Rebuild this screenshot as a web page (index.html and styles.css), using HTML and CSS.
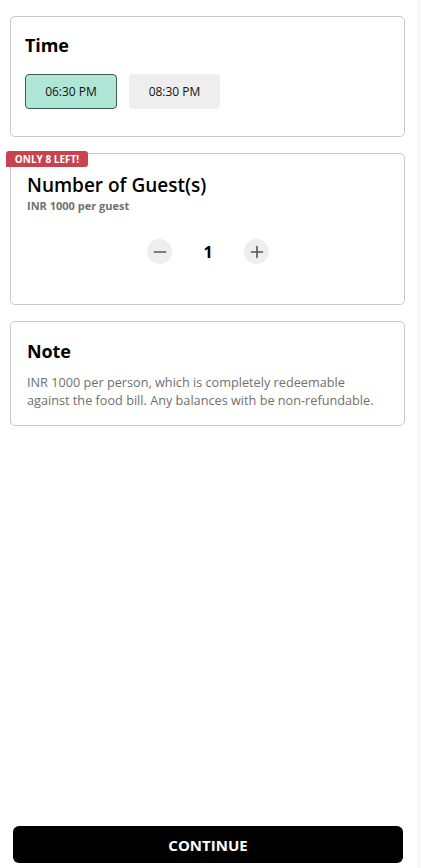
FILE: index.html
```html
<!DOCTYPE html>
<html lang="en">
<head>
<meta charset="utf-8">
<title>Reservation</title>
<link rel="stylesheet" href="styles.css">
</head>
<body>
<div class="page">
  <main class="content">
    <section class="card time-card">
      <h2 class="card-title">Time</h2>
      <div class="slots">
        <button class="slot selected">06:30 PM</button>
        <button class="slot">08:30 PM</button>
      </div>
    </section>

    <section class="card guest-card">
      <span class="badge">ONLY 8 LEFT!</span>
      <h2 class="guest-title">Number of Guest(s)</h2>
      <p class="guest-sub">INR 1000 per guest</p>
      <div class="stepper">
        <button class="step-btn" aria-label="Decrease">
          <svg width="14" height="14" viewBox="0 0 14 14"><path d="M1.5 7h11" stroke="#555" stroke-width="1.6" stroke-linecap="round"/></svg>
        </button>
        <span class="count">1</span>
        <button class="step-btn" aria-label="Increase">
          <svg width="14" height="14" viewBox="0 0 14 14"><path d="M1.5 7h11M7 1.5v11" stroke="#555" stroke-width="1.6" stroke-linecap="round"/></svg>
        </button>
      </div>
    </section>

    <section class="card note-card">
      <h2 class="card-title">Note</h2>
      <p class="note-text">INR 1000 per person, which is completely redeemable against the food bill. Any balances with be non-refundable.</p>
    </section>
  </main>

  <footer class="footer">
    <button class="continue">CONTINUE</button>
  </footer>
</div>
</body>
</html>
```

FILE: styles.css
```css
* {
  box-sizing: border-box;
}

html {
  background: #f8f8f8;
}

body {
  margin: 0;
  font-family: "Open Sans", "Noto Sans", sans-serif;
  color: #000;
}

.page {
  width: 417px;
  min-height: 868px;
  background: #fff;
  display: flex;
  flex-direction: column;
}

.content {
  padding: 16px 12px 0 10px;
  display: flex;
  flex-direction: column;
  gap: 16px;
}

.card {
  position: relative;
  border: 1px solid #c9c9c9;
  border-radius: 5px;
  background: #fff;
}

.time-card {
  height: 121px;
  padding: 16px 15px 0 14px;
}

.card-title {
  margin: 0;
  font-size: 18px;
  line-height: 24px;
  font-weight: 700;
  letter-spacing: -0.1px;
}

.slots {
  display: flex;
  gap: 12px;
  margin-top: 17px;
}

.slot {
  width: 91px;
  height: 35px;
  border: 1px solid transparent;
  border-radius: 4px;
  background: #eeeeee;
  font-family: inherit;
  font-size: 12px;
  color: #111;
  padding: 0;
}

.slot.selected {
  width: 92px;
  background: #b0e6d5;
  border-color: #3d5d52;
}

.guest-card {
  height: 152px;
  padding: 15px 15px 0 16px;
}

.badge {
  position: absolute;
  left: -5px;
  top: -3px;
  width: 82px;
  height: 16px;
  background: #c8434e;
  color: #fff;
  font-size: 10px;
  font-weight: 700;
  line-height: 16px;
  text-align: center;
  border-radius: 3px 3px 3px 0;
}

.guest-title {
  margin: 4px 0 0;
  font-size: 19px;
  line-height: 24px;
  font-weight: 600;
}

.guest-sub {
  margin: 1px 0 0;
  font-size: 11px;
  line-height: 16px;
  font-weight: 700;
  color: #6f6f6f;
}

.stepper {
  display: flex;
  justify-content: center;
  align-items: center;
  gap: 24px;
  margin-top: 25px;
}

.step-btn {
  width: 25px;
  height: 25px;
  border: none;
  border-radius: 50%;
  background: #eeeeee;
  padding: 0;
  display: flex;
  align-items: center;
  justify-content: center;
}

.count {
  width: 24px;
  text-align: center;
  font-size: 16px;
  font-weight: 700;
}

.note-card {
  height: 105px;
  padding: 17px 15px 0 16px;
}

.note-text {
  margin: 10px 0 0;
  max-width: 356px;
  font-size: 12.7px;
  line-height: 18px;
  color: #707070;
}

.footer {
  margin-top: auto;
  padding: 0 14px 5px 13px;
}

.continue {
  width: 390px;
  height: 37px;
  border: none;
  border-radius: 6px;
  background: #000;
  color: #fff;
  font-family: inherit;
  font-size: 15px;
  font-weight: 700;
  padding: 0;
}
```
